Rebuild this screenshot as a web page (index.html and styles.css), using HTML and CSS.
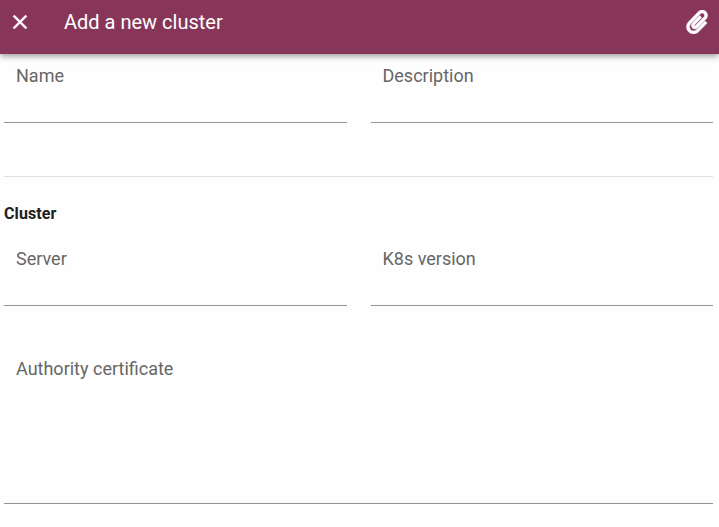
FILE: index.html
```html
<!DOCTYPE html>
<html lang="en">
<head>
<meta charset="utf-8">
<title>Add a new cluster</title>
<link rel="stylesheet" href="styles.css">
</head>
<body>
<header class="toolbar">
  <svg class="close" viewBox="0 0 24 24"><path d="M19 6.41L17.59 5 12 10.59 6.41 5 5 6.41 10.59 12 5 17.59 6.41 19 12 13.41 17.59 19 19 17.59 13.41 12z"/></svg>
  <h1 class="title">Add a new cluster</h1>
  <svg class="clip" viewBox="0 0 448 512"><path d="M43.246 466.142c-58.43-60.289-57.341-157.511 1.386-217.581L254.392 34c44.316-45.332 116.351-45.336 160.671 0 43.89 44.894 43.943 117.329 0 162.276L232.214 383.128c-29.855 30.537-78.633 30.111-107.982-.998-28.275-29.97-27.368-77.473 1.452-106.953l143.743-146.835c6.182-6.314 16.312-6.422 22.626-.241l22.861 22.379c6.315 6.182 6.422 16.312.241 22.626L171.427 319.927c-4.932 5.045-5.236 13.428-.648 18.292 4.372 4.634 11.245 4.711 15.688.165l182.849-186.851c19.613-20.062 19.613-52.725-.011-72.798-19.189-19.627-49.957-19.637-69.154 0L90.39 293.295c-34.763 35.56-35.299 93.12-1.191 128.313 34.01 35.093 88.985 35.137 123.058.286l172.06-175.999c6.177-6.319 16.307-6.433 22.626-.256l22.877 22.364c6.319 6.177 6.434 16.307.256 22.626l-172.06 175.998c-59.576 60.938-155.943 60.216-214.77-.485z"/></svg>
</header>
<main class="form">
  <div class="row">
    <label class="field">Name</label>
    <label class="field">Description</label>
  </div>
  <hr class="divider">
  <h2 class="section">Cluster</h2>
  <div class="row">
    <label class="field">Server</label>
    <label class="field">K8s version</label>
  </div>
  <label class="field area">Authority certificate</label>
</main>
</body>
</html>
```
FILE: styles.css
```css
* {
  box-sizing: border-box;
}

body {
  margin: 0;
  height: 527px;
  overflow: hidden;
  background: #fefefe;
  font-family: Roboto, "Liberation Sans", sans-serif;
}

.toolbar {
  position: relative;
  display: flex;
  align-items: center;
  height: 54px;
  padding: 0 11px 10px 8px;
  background: #87365a;
  box-shadow: 0 2px 4px -1px rgba(0, 0, 0, .2), 0 4px 5px rgba(0, 0, 0, .14), 0 1px 10px rgba(0, 0, 0, .12);
}

.close {
  width: 24px;
  height: 24px;
  fill: #fff;
  stroke: #fff;
  stroke-width: .4;
}

.title {
  flex: 1;
  margin: 0 0 0 32px;
  color: #fff;
  font-size: 20px;
  font-weight: 400;
  line-height: 24px;
}

.clip {
  width: 22px;
  height: 24px;
  fill: #fff;
  stroke: #fff;
  stroke-width: 10;
}

.form {
  padding: 0 6px 0 4px;
}

.row {
  display: grid;
  grid-template-columns: 1fr 1fr;
  column-gap: 24px;
}

.field {
  display: block;
  height: 69px;
  padding: 10px 12px 0;
  border-bottom: 1px solid #949494;
  color: #666;
  font-size: 18px;
  line-height: 24px;
}

.divider {
  height: 1px;
  margin: 53px 0 25px;
  border: 0;
  background: #e0e0e0;
}

.section {
  margin: 0 0 12px;
  color: #212121;
  font-size: 16px;
  font-weight: 700;
  letter-spacing: .1px;
  line-height: 23px;
}

.area {
  height: 157px;
  margin-top: 41px;
}
```
